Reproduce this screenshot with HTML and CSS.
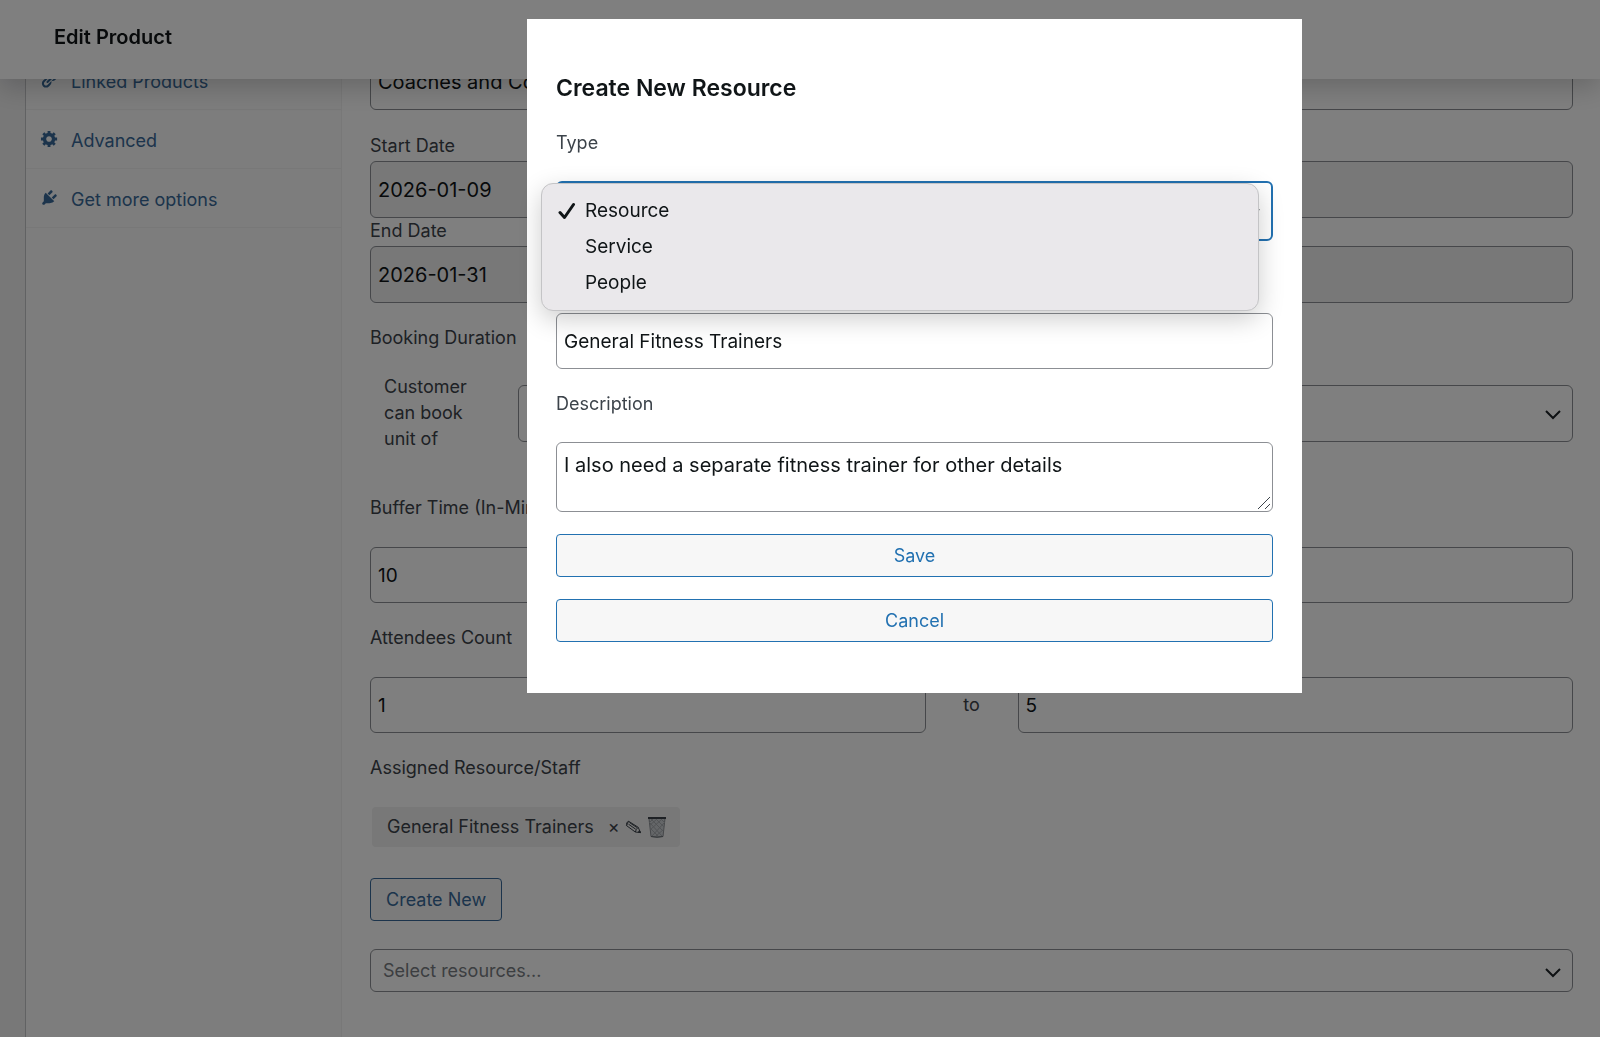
FILE: index.html
```html
<!DOCTYPE html>
<html lang="en">
<head>
<meta charset="utf-8">
<meta name="viewport" content="width=device-width, initial-scale=1">
<title>Edit Product</title>
<link rel="stylesheet" href="styles.css">
</head>
<body>
<header class="topbar"><h1 class="topbar-title">Edit Product</h1></header>

<div class="panel">
  <nav class="tabs" aria-label="Product data">
    <a class="tab" href="#linked">
      <svg class="tab-icon" viewBox="0 0 20 20" aria-hidden="true"><path d="M17.74 2.76c1.68 1.69 1.68 4.41 0 6.1l-1.53 1.52c-1.12 1.12-2.7 1.47-4.14 1.09l2.62-2.61.76-.77.76-.76c.84-.84.84-2.2 0-3.04-.84-.85-2.2-.85-3.04 0l-.77.76-3.38 3.38c-.37-1.44-.02-3.02 1.1-4.14l1.52-1.53c1.69-1.68 4.42-1.68 6.1 0zM8.59 13.43l5.34-5.34c.42-.42.42-1.1 0-1.52-.44-.43-1.13-.39-1.53 0l-5.33 5.34c-.42.42-.42 1.1 0 1.52.44.43 1.13.39 1.52 0zm-.76 2.29l4.14-4.15c.38 1.44.03 3.02-1.09 4.14l-1.52 1.53c-1.69 1.68-4.41 1.68-6.1 0-1.68-1.68-1.68-4.42 0-6.1l1.53-1.52c1.12-1.12 2.7-1.47 4.14-1.1l-4.14 4.15c-.85.84-.85 2.2 0 3.05.84.84 2.2.84 3.04 0z"/></svg>
      <span>Linked Products</span>
    </a>
    <a class="tab" href="#advanced">
      <svg class="tab-icon" viewBox="0 0 20 20" aria-hidden="true"><path d="M18 12h-2.18c-.17.7-.44 1.35-.81 1.93l1.54 1.54-2.1 2.1-1.54-1.54c-.58.36-1.23.63-1.91.79V19H8v-2.18c-.68-.16-1.33-.43-1.91-.79l-1.54 1.54-2.12-2.12 1.54-1.54c-.36-.58-.63-1.23-.79-1.91H1V9.03h2.17c.16-.7.44-1.35.8-1.94L2.43 5.55l2.1-2.1 1.54 1.54c.58-.37 1.24-.64 1.93-.81V2h3v2.18c.68.16 1.33.43 1.91.79l1.54-1.54 2.12 2.12-1.54 1.54c.36.59.64 1.24.8 1.94H18V12zm-8.5 1.5c1.66 0 3-1.34 3-3s-1.34-3-3-3-3 1.34-3 3 1.34 3 3 3z"/></svg>
      <span>Advanced</span>
    </a>
    <a class="tab" href="#more">
      <svg class="tab-icon" viewBox="0 0 20 20" aria-hidden="true"><path d="M13.11 4.36L9.87 7.6 8 5.73l3.24-3.24c.35-.34 1.05-.2 1.56.32.52.51.66 1.21.31 1.55zm-8 1.77l.91-1.12 9.01 9.01-1.19.84c-.71.71-2.63 1.16-3.82 1.16H6.14L4.9 17.26c-.59.59-1.54.59-2.12 0-.59-.58-.59-1.53 0-2.12l1.24-1.24v-3.88c0-1.13.4-3.19 1.09-3.89zm7.26 3.97l3.24-3.24c.34-.35 1.04-.21 1.55.31.52.51.66 1.21.31 1.55l-3.24 3.25z"/></svg>
      <span>Get more options</span>
    </a>
  </nav>

  <main class="fields">
    <input class="control" type="text" aria-label="Service name" value="Coaches and Consultants">

    <div class="field field-tight field-first">
      <label class="label" for="start">Start Date</label>
      <input class="control control-readonly" id="start" type="text" value="2026-01-09" readonly>
    </div>
    <div class="field field-tight">
      <label class="label" for="end">End Date</label>
      <input class="control control-readonly" id="end" type="text" value="2026-01-31" readonly>
    </div>

    <div class="field duration">
      <span class="label">Booking Duration</span>
      <div class="duration-row">
        <label class="label duration-label" for="unit">Customer can book unit of</label>
        <select class="control select" id="unit"><option></option></select>
      </div>
    </div>

    <div class="field">
      <label class="label" for="buffer">Buffer Time (In-Minutes)</label>
      <input class="control control-number" id="buffer" type="text" value="10">
    </div>

    <div class="field">
      <label class="label" for="min">Attendees Count</label>
      <div class="range">
        <input class="control control-number" id="min" type="text" value="1">
        <label class="range-to" for="max">to</label>
        <input class="control control-number" id="max" type="text" value="5">
      </div>
    </div>

    <div class="field">
      <span class="label">Assigned Resource/Staff</span>
      <div class="chip">
        <span>General Fitness Trainers</span>
        <button class="chip-button" type="button" aria-label="Remove">×</button>
        <button class="chip-button" type="button" aria-label="Edit">
          <svg class="pencil" viewBox="0 0 16 14" aria-hidden="true"><path d="M1 4.500Q.6 2.200 3.200 1.300L12.700 7.300 15 12.600 9.800 12 .9 5.500zM3.200 1.300Q1.700 3 1.300 5.500M12.700 7.300Q10.500 9 9.800 12M3 4.200l7.200 5M4 2.600l7.400 4.900"/><path class="pencil-tip" d="M15 12.600l-2-.3.900-2z"/></svg>
        </button>
        <button class="chip-button" type="button" aria-label="Delete">
          <svg class="trash" viewBox="0 0 20 22" aria-hidden="true"><path class="trash-body" d="M2 2.500h16L16 20.500q-6 1.500-12 0z"/><path class="trash-mesh" d="M3 7l12 13M3 12l8 8M4 3l12 12M9 3l8 8M14 3l4 4M17 7L5 20M17 13l-8 7M15 3L3 14M10 3L2 10M6 3L2 7"/><path class="trash-rim" d="M1 2h18"/><path class="trash-base" d="M4 20.500q6 1.200 12 0"/></svg>
        </button>
      </div>
    </div>

    <button class="button create" type="button">Create New</button>
    <select class="control select resources" aria-label="Resources"><option>Select resources...</option></select>
  </main>
</div>

<div class="overlay">
  <section class="modal" role="dialog" aria-modal="true" aria-labelledby="modal-title">
    <h2 class="modal-title" id="modal-title">Create New Resource</h2>

    <label class="label" for="type">Type</label>
    <div class="type">
      <select class="control select select-open" id="type"><option>Resource</option><option>Service</option><option>People</option></select>
      <ul class="menu" role="listbox" aria-label="Type">
        <li class="menu-item" role="option" aria-selected="true">
          <svg class="check" viewBox="0 0 18 18" aria-hidden="true"><path d="M2 10.500L6.500 15.500 15.500 2.500"/></svg>
          <span>Resource</span>
        </li>
        <li class="menu-item" role="option" aria-selected="false">Service</li>
        <li class="menu-item" role="option" aria-selected="false">People</li>
      </ul>
    </div>

    <input class="control control-number modal-name" type="text" aria-label="Name" value="General Fitness Trainers">

    <label class="label" for="description">Description</label>
    <div class="description">
      <textarea class="control textarea" id="description">I also need a separate fitness trainer for other details</textarea>
      <svg class="grip" viewBox="0 0 14 14" aria-hidden="true"><path d="M1 13L13 1M8 13l5-5"/></svg>
    </div>

    <div class="modal-actions">
      <button class="button button-modal" type="button">Save</button>
      <button class="button button-modal" type="button">Cancel</button>
    </div>
  </section>
</div>
</body>
</html>
```
FILE: styles.css
```css
* {
  box-sizing: border-box;
}

body {
  margin: 0;
  background: #f0f0f1;
  color: #3c434a;
  font-family: Inter, "Liberation Sans", sans-serif;
  font-size: 18px;
  line-height: 26px;
}

/* Top bar */
.topbar {
  position: fixed;
  inset: 0 0 auto;
  z-index: 1;
  display: flex;
  align-items: center;
  height: 79px;
  padding: 0 54px 5px;
  background: #fff;
  box-shadow: 0 8px 28px rgba(0, 0, 0, 0.2);
}

.topbar-title {
  margin: 0;
  color: #101517;
  font-size: 20px;
  font-weight: 600;
}

/* Product data panel */
.panel {
  display: flex;
  min-height: calc(100vh - 51px);
  margin: 51px 0 0 25px;
  border-left: 1px solid #c3c4c7;
  background: #fff;
}

.tabs {
  flex: none;
  width: 316px;
  border-right: 1px solid #f0f0f0;
  background: #fafafa;
}

.tab {
  display: flex;
  align-items: center;
  gap: 12px;
  height: 59px;
  padding: 3px 14px 0;
  border-bottom: 1px solid #f0f0f0;
  color: #386998;
  text-decoration: none;
}

.tab-icon {
  width: 19px;
  height: 19px;
  margin-bottom: 5px;
  fill: #386998;
}

.fields {
  flex: 1;
  min-width: 0;
  padding: 2px 27px 43px 28px;
}

.label {
  display: block;
}

.control {
  display: block;
  width: 100%;
  height: 57px;
  margin: 0;
  padding: 0 7px;
  border: 1px solid #8c8f94;
  border-radius: 6px;
  background: #fff;
  color: #101517;
  font: inherit;
  font-size: 20px;
}

.control-readonly {
  background: #f0f0f1;
}

.control-number {
  height: 56px;
  font-size: 19px;
}

.select {
  appearance: none;
  padding: 0 36px 0 12px;
  background: #fff url("data:image/svg+xml,%3Csvg xmlns='http://www.w3.org/2000/svg' viewBox='0 0 24 24'%3E%3Cpath d='M5 10l7 7 7-7' fill='none' stroke='%231d2327' stroke-width='2'/%3E%3C/svg%3E") no-repeat right 7px center / 24px;
}

.field {
  margin-top: 22px;
}

.field > .label {
  margin-bottom: 26px;
}

.field-tight {
  margin-top: 0;
}

.field-tight > .label {
  margin-bottom: 2px;
}

.field-first {
  margin: 23px 0 0;
}

.duration > .label {
  margin-bottom: 23px;
}

.duration-row {
  display: flex;
  align-items: center;
  margin-bottom: 43px;
  padding-left: 14px;
}

.duration-label {
  flex: none;
  width: 134px;
  padding-right: 34px;
}

.range {
  display: grid;
  grid-template-columns: 1fr 92px 1fr;
  align-items: center;
}

.range-to {
  text-align: center;
}

.chip {
  display: flex;
  align-items: center;
  gap: 5px;
  width: max-content;
  height: 40px;
  margin-left: 2px;
  padding: 0 13px 0 15px;
  border-radius: 4px;
  background: #f0f0f0;
}

.chip-button {
  display: flex;
  padding: 0;
  border: 0;
  background: none;
  color: #3c434a;
  font: inherit;
}

.chip-button:first-of-type {
  margin-left: 9px;
}

.pencil {
  width: 17px;
  height: 14px;
  fill: none;
  stroke: #3c434a;
}

.pencil-tip {
  fill: #3c434a;
}

.trash {
  width: 20px;
  height: 22px;
  fill: none;
}

.trash-body {
  fill: #c8ccd0;
  stroke: #8c9095;
}

.trash-mesh {
  stroke: #a4a8ac;
}

.trash-rim {
  stroke: #3c434a;
  stroke-width: 2;
}

.trash-base {
  stroke: #6a7076;
}

.button {
  display: block;
  height: 43px;
  padding: 0 15px;
  border: 1px solid #386998;
  border-radius: 4px;
  background: #f7f7f7;
  color: #386998;
  font: inherit;
}

.create {
  margin: 31px 0 28px;
}

.resources {
  height: 43px;
  color: #787c82;
  font-size: 18px;
}

/* Dialog */
.overlay {
  position: fixed;
  inset: 0;
  z-index: 2;
  display: grid;
  grid-template-columns: 527fr 775fr 298fr;
  align-items: start;
  padding-top: 19px;
  background: rgba(0, 0, 0, 0.5);
}

.modal {
  grid-column: 2;
  min-width: 0;
  padding: 53px 29px 51px;
  background: #fff;
}

.modal-title {
  margin: 0 0 26px;
  color: #101517;
  font-size: 23px;
  font-weight: 600;
  line-height: 32px;
}

.type {
  position: relative;
  margin-top: 25px;
}

.select-open {
  height: 60px;
  border: 2px solid #2271b1;
}

.menu {
  position: absolute;
  inset: 2px 14px auto -15px;
  margin: 0;
  padding: 9px 0;
  border: 1px solid #c4c4c6;
  border-radius: 12px;
  background: #eae8eb;
  box-shadow: 0 8px 26px rgba(0, 0, 0, 0.2);
  color: #101517;
  font-size: 19px;
  list-style: none;
}

.menu-item {
  position: relative;
  padding: 5px 43px;
}

.check {
  position: absolute;
  left: 16px;
  top: 9px;
  width: 18px;
  height: 18px;
  fill: none;
  stroke: #101517;
  stroke-width: 3;
  stroke-linecap: round;
  stroke-linejoin: round;
}

.modal-name {
  margin: 72px 0 22px;
}

.description {
  position: relative;
  margin-top: 25px;
}

.textarea {
  height: 70px;
  padding: 8px 7px;
  line-height: 28px;
  resize: none;
}

.grip {
  position: absolute;
  right: 2px;
  bottom: 2px;
  width: 14px;
  height: 14px;
  fill: none;
  stroke: #3c434a;
}

.modal-actions {
  display: grid;
  gap: 22px;
  margin-top: 22px;
}

.button-modal {
  width: 100%;
  border-color: #2271b1;
  color: #2271b1;
}
```
